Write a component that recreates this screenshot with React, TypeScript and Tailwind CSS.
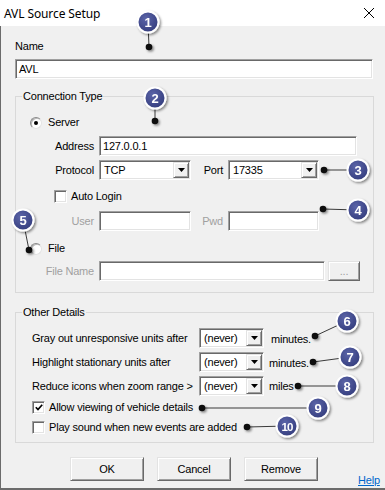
import React from 'react'

const sunken =
  'border border-t-[#a0a0a0] border-l-[#a0a0a0] border-r-white border-b-white shadow-[inset_1px_1px_0_#696969,inset_-1px_-1px_0_#e3e3e3]'
const raised =
  'border border-t-[#e3e3e3] border-l-[#e3e3e3] border-r-[#696969] border-b-[#696969] shadow-[inset_1px_1px_0_#ffffff,inset_-1px_-1px_0_#a0a0a0]'

function TextBox({ value = '', w, className = '' }: { value?: string; w: string; className?: string }) {
  return (
    <div className={`${sunken} ${w} ${className} h-[20px] bg-white flex items-center pl-[3px]`}>
      {value}
    </div>
  )
}

function Combo({ value, w, className = '' }: { value: string; w: string; className?: string }) {
  return (
    <div className={`${sunken} ${w} ${className} h-[20px] bg-white flex items-center p-[1px]`}>
      <span className="flex-1 pl-[3px]">{value}</span>
      <div className={`${raised} w-[16px] h-full bg-[#f0f0f0] flex items-center justify-center`}>
        <svg width="7" height="4" viewBox="0 0 7 4">
          <path d="M0 0h7L3.5 4z" fill="#000" />
        </svg>
      </div>
    </div>
  )
}

function Check({ checked = false }: { checked?: boolean }) {
  return (
    <div className={`${sunken} w-[13px] h-[13px] bg-white flex items-center justify-center shrink-0`}>
      {checked && (
        <svg width="8" height="7" viewBox="0 0 8 7">
          <path d="M0.8 3.2 L3 5.6 L7.2 0.8" stroke="#000" strokeWidth="1.7" fill="none" />
        </svg>
      )}
    </div>
  )
}

function Radio({ checked = false }: { checked?: boolean }) {
  return (
    <div className="w-[12px] h-[12px] rounded-full bg-white border border-t-[#8a8a8a] border-l-[#8a8a8a] border-r-[#e3e3e3] border-b-[#e3e3e3] shadow-[inset_1px_1px_0_#b8b8b8] flex items-center justify-center shrink-0">
      {checked && <div className="w-[4px] h-[4px] rounded-full bg-black" />}
    </div>
  )
}

function Button({ label, className = '' }: { label: string; className?: string }) {
  return (
    <div className={`${raised} ${className} w-[74px] h-[24px] bg-[#f0f0f0] flex items-center justify-center`}>
      {label}
    </div>
  )
}

const callouts = [
  { n: '1', cx: 148, cy: 22, dx: 149, dy: 47 },
  { n: '2', cx: 155, cy: 98, dx: 155, dy: 121 },
  { n: '3', cx: 358, cy: 170, dx: 324, dy: 170 },
  { n: '4', cx: 358, cy: 210, dx: 323, dy: 209 },
  { n: '5', cx: 23, cy: 220, dx: 29, dy: 250 },
  { n: '6', cx: 347, cy: 321, dx: 315, dy: 336 },
  { n: '7', cx: 350, cy: 357, dx: 313, dy: 362 },
  { n: '8', cx: 347, cy: 386, dx: 298, dy: 386 },
  { n: '9', cx: 318, cy: 408, dx: 202, dy: 408 },
  { n: '10', cx: 287, cy: 426, dx: 247, dy: 427 },
]

function Callouts() {
  return (
    <svg className="absolute left-0 top-0 pointer-events-none" width="385" height="490" viewBox="0 0 385 490">
      <defs>
        <radialGradient id="ball" cx="40%" cy="35%" r="70%">
          <stop offset="0%" stopColor="#5b64a8" />
          <stop offset="100%" stopColor="#333c7c" />
        </radialGradient>
        <filter id="shadow" x="-50%" y="-50%" width="200%" height="200%">
          <feDropShadow dx="1.5" dy="1.5" stdDeviation="1.2" floodColor="#000" floodOpacity="0.45" />
        </filter>
      </defs>
      {callouts.map((c) => (
        <line key={'l' + c.n} x1={c.cx} y1={c.cy} x2={c.dx} y2={c.dy} stroke="#3a3a3a" strokeWidth="1" />
      ))}
      {callouts.map((c) => (
        <circle key={'d' + c.n} cx={c.dx} cy={c.dy} r="3.3" fill="#111" filter="url(#shadow)" />
      ))}
      {callouts.map((c) => (
        <g key={'c' + c.n} filter="url(#shadow)">
          <circle cx={c.cx} cy={c.cy} r="10.5" fill="url(#ball)" stroke="#fff" strokeWidth="2" />
          <text
            x={c.cx}
            y={c.cy + 4.5}
            textAnchor="middle"
            fill="#fff"
            fontFamily="'Liberation Sans', Arial, sans-serif"
            fontWeight="bold"
            fontSize={c.n.length > 1 ? 11.5 : 13}
            letterSpacing={c.n.length > 1 ? -0.8 : 0}
          >
            {c.n}
          </text>
        </g>
      ))}
    </svg>
  )
}

export default function App() {
  return (
    <div className="relative w-[385px] h-[490px] overflow-hidden bg-[#f0f0f0] shadow-[inset_1px_0_0_#6b6b6b,inset_0_-2px_0_#6b6b6b] font-['Liberation_Sans',Arial,sans-serif] text-[11px] leading-[13px] tracking-[-0.2px] text-black">
      {/* title bar */}
      <div className="h-[26px] bg-white flex items-center pl-[4px] pr-[11px] font-['Noto_Sans',sans-serif] text-[12px] tracking-[-0.1px]">
        <span className="flex-1">AVL Source Setup</span>
        <svg width="10" height="10" viewBox="0 0 10 10">
          <path d="M0 0L10 10M10 0L0 10" stroke="#000" strokeWidth="1" />
        </svg>
      </div>

      <div className="flex flex-col items-start pl-[15px]">
        <div className="mt-[14px] h-[13px]">Name</div>
        <TextBox value="AVL" w="w-[358px]" className="mt-[6px]" />

        <fieldset className="mt-[11px] w-[359px] border border-[#d9d9d9] pb-[11px]">
          <legend className="ml-[6px] px-[1px]">Connection Type</legend>
          <div className="mt-[13px] ml-[14px] h-[13px] flex items-center gap-[6px]">
            <Radio checked />
            <span>Server</span>
          </div>
          <div className="mt-[7px] ml-[24px] flex items-center">
            <span className="w-[54px] text-right">Address</span>
            <TextBox value="127.0.0.1" w="w-[258px]" className="ml-[5px]" />
          </div>
          <div className="mt-[4px] ml-[24px] flex items-center">
            <span className="w-[54px] text-right">Protocol</span>
            <Combo value="TCP" w="w-[92px]" className="ml-[5px]" />
            <span className="w-[37px] text-right pr-[5px]">Port</span>
            <Combo value="17335" w="w-[91px]" />
          </div>
          <div className="mt-[10px] ml-[38px] h-[13px] flex items-center gap-[4px]">
            <Check />
            <span>Auto Login</span>
          </div>
          <div className="mt-[8px] ml-[24px] flex items-center text-[#a0a0a0]">
            <span className="w-[54px] text-right">User</span>
            <TextBox w="w-[92px]" className="ml-[5px]" />
            <span className="w-[37px] text-right pr-[5px]">Pwd</span>
            <TextBox w="w-[91px]" />
          </div>
          <div className="mt-[11px] ml-[14px] h-[13px] flex items-center gap-[6px]">
            <Radio />
            <span>File</span>
          </div>
          <div className="mt-[6px] ml-[24px] flex items-center text-[#a0a0a0]">
            <span className="w-[54px] text-right">File Name</span>
            <TextBox w="w-[226px]" className="ml-[5px]" />
            <div className={`${raised} ml-[3px] w-[32px] h-[20px] bg-[#f0f0f0] flex items-center justify-center`}>
              ...
            </div>
          </div>
        </fieldset>

        <fieldset className="mt-[13px] w-[359px] border border-[#d9d9d9] pb-[8px]">
          <legend className="ml-[6px] px-[1px]">Other Details</legend>
          <div className="mt-[9px] ml-[16px] flex items-center">
            <span className="w-[167px]">Gray out unresponsive units after</span>
            <Combo value="(never)" w="w-[65px]" />
            <span className="ml-[7px] mt-[2px]">minutes.</span>
          </div>
          <div className="mt-[4px] ml-[16px] flex items-center">
            <span className="w-[167px]">Highlight stationary units after</span>
            <Combo value="(never)" w="w-[65px]" />
            <span className="ml-[5px] mt-[2px]">minutes.</span>
          </div>
          <div className="mt-[4px] ml-[16px] flex items-center">
            <span className="w-[167px]">Reduce icons when zoom range &gt;</span>
            <Combo value="(never)" w="w-[65px]" />
            <span className="ml-[5px]">miles</span>
          </div>
          <div className="mt-[5px] ml-[16px] h-[13px] flex items-center gap-[4px]">
            <Check checked />
            <span>Allow viewing of vehicle details</span>
          </div>
          <div className="mt-[7px] ml-[16px] h-[13px] flex items-center gap-[4px]">
            <Check />
            <span>Play sound when new events are added</span>
          </div>
        </fieldset>

        <div className="mt-[14px] flex items-start">
          <Button label="OK" className="ml-[55px]" />
          <Button label="Cancel" className="ml-[13px]" />
          <Button label="Remove" className="ml-[13px]" />
          <span className="ml-[40px] mt-[17px] text-[#0066cc] underline">Help</span>
        </div>
      </div>

      <Callouts />
    </div>
  )
}
